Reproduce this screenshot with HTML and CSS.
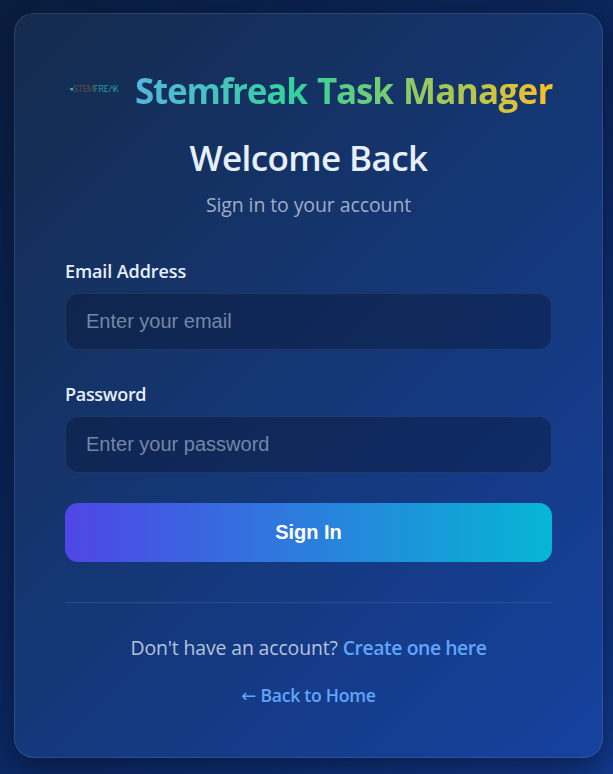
FILE: index.html
```html
<!DOCTYPE html>
<html lang="en">
<head>
<meta charset="utf-8">
<title>Stemfreak Task Manager</title>
<link rel="stylesheet" href="styles.css">
</head>
<body>
<main class="card">
  <header class="brand">
    <svg class="logo" viewBox="0 0 60 40" aria-label="Stemfreak">
      <path d="M3.5 17 6 20 8 18" fill="none" stroke="#453f48" stroke-width="1"/>
      <path d="M5 18h3v2.4H6z" fill="#22b8ad"/>
      <text class="logo-freak" x="8" y="21.7"><tspan class="logo-stem">STEM</tspan>FRE<tspan class="logo-k" dx="4.7">K</tspan></text>
      <path class="logo-a" d="M44.2 21.7 46.7 15.6 49.2 21.7"/>
    </svg>
    <h1 class="title"><span class="tight">Stemfreak</span> <span class="tight">Task</span> <span class="loose">Manager</span></h1>
  </header>
  <h2 class="welcome">Welcome Back</h2>
  <p class="subtitle">Sign in to your account</p>
  <form class="form">
    <label class="label label-email" for="email">Email Address</label>
    <input class="input" id="email" type="email" placeholder="Enter your email">
    <label class="label label-password" for="password">Password</label>
    <input class="input" id="password" type="password" placeholder="Enter your password">
    <button class="submit" type="button">Sign In</button>
  </form>
  <footer class="footer">
    <p class="signup"><span class="question">Don't have an account?</span> <a class="link create" href="#">Create one here</a></p>
    <p class="home"><a class="link" href="#"><span class="arrow">←</span> Back to Home</a></p>
  </footer>
</main>
</body>
</html>
```

FILE: styles.css
```css
* { box-sizing: border-box; }
body {
  margin: 0;
  height: 774px;
  padding: 13px 10px 16px 14px;
  overflow: hidden;
  font-family: "Open Sans", "Noto Sans", sans-serif;
  color: #e6effb;
  background: linear-gradient(135deg, #0a1e3f 0%, #0b2860 50%, #133a8e 100%);
}
h1, h2, p { margin: 0; }
.card {
  height: 745px;
  padding: 49px 50px;
  border: 1px solid rgba(160, 180, 215, 0.16);
  border-radius: 20px;
  background: linear-gradient(135deg, #152b4d 0%, #14346b 38%, #153b87 70%, #16429f 100%) border-box;
  box-shadow: 0 10px 32px rgba(5, 12, 35, 0.6);
}
.brand {
  display: flex;
  align-items: center;
  gap: 10px;
  height: 56px;
}
.logo { flex: none; width: 60px; height: 40px; margin-top: -2px; }
.logo text { font-family: Roboto, sans-serif; font-size: 8.6px; letter-spacing: -0.1px; }
.logo .logo-stem { fill: #4b444b; font-weight: 500; letter-spacing: -0.5px; }
.logo-freak { fill: #21989d; }
.logo-a { fill: none; stroke: #21989d; stroke-width: 0.8; }
.title {
  font-size: 35px;
  line-height: 52px;
  font-weight: 700;
  letter-spacing: -0.8px;
  word-spacing: 2px;
  white-space: nowrap;
  color: transparent;
  background: linear-gradient(90deg, #54b4df 0%, #34d399 40%, #fbbf24 100%);
  background-clip: text;
  -webkit-background-clip: text;
}
.tight { letter-spacing: -1.2px; }
.loose { letter-spacing: -0.7px; }
.welcome {
  margin-top: 15px;
  text-align: center;
  font-size: 35px;
  line-height: 48px;
  font-weight: 600;
  letter-spacing: -0.6px;
}
.subtitle {
  margin-top: 10px;
  text-align: center;
  font-size: 19.5px;
  line-height: 26px;
  color: #9eadc9;
  letter-spacing: -0.1px;
}
.form { display: flex; flex-direction: column; margin-top: 41px; }
.label {
  font-size: 18px;
  line-height: 24px;
  font-weight: 600;
  letter-spacing: -0.2px;
  margin-bottom: 10px;
}
.label-email { letter-spacing: -0.1px; }
.label-password { margin-top: 32px; letter-spacing: -0.3px; }
.input {
  height: 57px;
  padding: 0 20px;
  border: 1px solid rgba(148, 163, 184, 0.15);
  border-radius: 13px;
  outline: none;
  background: rgba(8, 20, 50, 0.4);
  color: #e6effb;
  font: 20px "Liberation Sans", sans-serif;
}
.input::placeholder { color: #7486a5; opacity: 1; }
.submit {
  height: 59px;
  margin-top: 30px;
  border: 0;
  border-radius: 13px;
  color: #fff;
  font: bold 20px "Liberation Sans", sans-serif;
  background: linear-gradient(90deg, #4f46e5, #06b6d4);
}
.footer {
  margin-top: 40px;
  padding-top: 31px;
  border-top: 1px solid rgba(160, 180, 215, 0.16);
  text-align: center;
}
.signup { font-size: 19.4px; line-height: 27px; color: #b5c3dc; }
.question { letter-spacing: -0.12px; }
.create { letter-spacing: -0.44px; }
.link { color: #60a5fa; text-decoration: none; font-weight: 600; }
.home { margin-top: 21px; font-size: 17.6px; line-height: 26px; letter-spacing: -0.25px; }
.arrow {
  font-family: "DejaVu Sans", sans-serif;
  font-weight: 400;
  font-size: 18px;
  line-height: 1;
}
```
